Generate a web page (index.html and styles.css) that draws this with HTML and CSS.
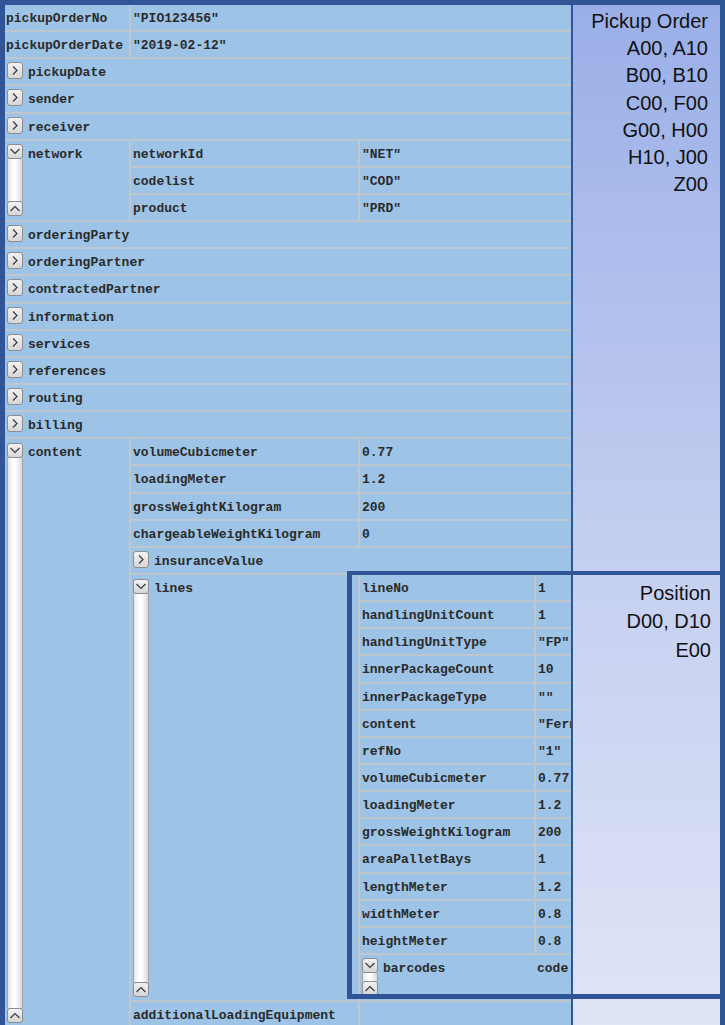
FILE: index.html
```html
<!DOCTYPE html>
<html>
<head>
<meta charset="utf-8">
<title>Pickup Order</title>
<link rel="stylesheet" href="styles.css">
</head>
<body>
<div class="frame">
  <div class="tree">
    <div class="row"><div class="k k0">pickupOrderNo</div><div class="v">"PIO123456"</div></div>
    <div class="row"><div class="k k0">pickupOrderDate</div><div class="v">"2019-02-12"</div></div>
    <div class="row"><div class="tog"><span class="btn"><svg viewBox="0 0 14 15"><path d="M5 3.5 L9 7.5 L5 11.5"/></svg></span></div><div class="lbl">pickupDate</div></div>
    <div class="row"><div class="tog"><span class="btn"><svg viewBox="0 0 14 15"><path d="M5 3.5 L9 7.5 L5 11.5"/></svg></span></div><div class="lbl">sender</div></div>
    <div class="row"><div class="tog"><span class="btn"><svg viewBox="0 0 14 15"><path d="M5 3.5 L9 7.5 L5 11.5"/></svg></span></div><div class="lbl">receiver</div></div>
    <div class="row">
      <div class="tog"><div class="sb"><span class="sbb"><svg viewBox="0 0 14 13"><path d="M2.5 4 L7 8.5 L11.5 4"/></svg></span><span class="trk"></span><span class="sbb"><svg viewBox="0 0 14 13"><path d="M2.5 9 L7 4.5 L11.5 9"/></svg></span></div></div>
      <div class="lbl l0">network</div>
      <div class="nest">
        <div class="row"><div class="k k1">networkId</div><div class="v">"NET"</div></div>
        <div class="row"><div class="k k1">codelist</div><div class="v">"COD"</div></div>
        <div class="row last"><div class="k k1">product</div><div class="v">"PRD"</div></div>
      </div>
    </div>
    <div class="row"><div class="tog"><span class="btn"><svg viewBox="0 0 14 15"><path d="M5 3.5 L9 7.5 L5 11.5"/></svg></span></div><div class="lbl">orderingParty</div></div>
    <div class="row"><div class="tog"><span class="btn"><svg viewBox="0 0 14 15"><path d="M5 3.5 L9 7.5 L5 11.5"/></svg></span></div><div class="lbl">orderingPartner</div></div>
    <div class="row"><div class="tog"><span class="btn"><svg viewBox="0 0 14 15"><path d="M5 3.5 L9 7.5 L5 11.5"/></svg></span></div><div class="lbl">contractedPartner</div></div>
    <div class="row"><div class="tog"><span class="btn"><svg viewBox="0 0 14 15"><path d="M5 3.5 L9 7.5 L5 11.5"/></svg></span></div><div class="lbl">information</div></div>
    <div class="row"><div class="tog"><span class="btn"><svg viewBox="0 0 14 15"><path d="M5 3.5 L9 7.5 L5 11.5"/></svg></span></div><div class="lbl">services</div></div>
    <div class="row"><div class="tog"><span class="btn"><svg viewBox="0 0 14 15"><path d="M5 3.5 L9 7.5 L5 11.5"/></svg></span></div><div class="lbl">references</div></div>
    <div class="row"><div class="tog"><span class="btn"><svg viewBox="0 0 14 15"><path d="M5 3.5 L9 7.5 L5 11.5"/></svg></span></div><div class="lbl">routing</div></div>
    <div class="row"><div class="tog"><span class="btn"><svg viewBox="0 0 14 15"><path d="M5 3.5 L9 7.5 L5 11.5"/></svg></span></div><div class="lbl">billing</div></div>
    <div class="row">
      <div class="tog tog-c"><div class="sb"><span class="sbb"><svg viewBox="0 0 14 13"><path d="M2.5 4 L7 8.5 L11.5 4"/></svg></span><span class="trk"></span><span class="sbb"><svg viewBox="0 0 14 13"><path d="M2.5 9 L7 4.5 L11.5 9"/></svg></span></div></div>
      <div class="lbl l0">content</div>
      <div class="nest">
        <div class="row"><div class="k k1">volumeCubicmeter</div><div class="v">0.77</div></div>
        <div class="row"><div class="k k1">loadingMeter</div><div class="v">1.2</div></div>
        <div class="row"><div class="k k1">grossWeightKilogram</div><div class="v">200</div></div>
        <div class="row"><div class="k k1">chargeableWeightKilogram</div><div class="v">0</div></div>
        <div class="row"><div class="tog"><span class="btn"><svg viewBox="0 0 14 15"><path d="M5 3.5 L9 7.5 L5 11.5"/></svg></span></div><div class="lbl">insuranceValue</div></div>
        <div class="row">
          <div class="tog tog-l"><div class="sb"><span class="sbb"><svg viewBox="0 0 14 13"><path d="M2.5 4 L7 8.5 L11.5 4"/></svg></span><span class="trk"></span><span class="sbb"><svg viewBox="0 0 14 13"><path d="M2.5 9 L7 4.5 L11.5 9"/></svg></span></div></div>
          <div class="lbl l1">lines</div>
          <div class="nest">
            <div class="row"><div class="k k2">lineNo</div><div class="v">1</div></div>
            <div class="row"><div class="k k2">handlingUnitCount</div><div class="v">1</div></div>
            <div class="row"><div class="k k2">handlingUnitType</div><div class="v">"FP"</div></div>
            <div class="row"><div class="k k2">innerPackageCount</div><div class="v">10</div></div>
            <div class="row"><div class="k k2">innerPackageType</div><div class="v">""</div></div>
            <div class="row"><div class="k k2">content</div><div class="v">"Fernseher"</div></div>
            <div class="row"><div class="k k2">refNo</div><div class="v">"1"</div></div>
            <div class="row"><div class="k k2">volumeCubicmeter</div><div class="v">0.77</div></div>
            <div class="row"><div class="k k2">loadingMeter</div><div class="v">1.2</div></div>
            <div class="row"><div class="k k2">grossWeightKilogram</div><div class="v">200</div></div>
            <div class="row"><div class="k k2">areaPalletBays</div><div class="v">1</div></div>
            <div class="row"><div class="k k2">lengthMeter</div><div class="v">1.2</div></div>
            <div class="row"><div class="k k2">widthMeter</div><div class="v">0.8</div></div>
            <div class="row"><div class="k k2">heightMeter</div><div class="v">0.8</div></div>
            <div class="row last tall">
              <div class="tog"><div class="sb"><span class="sbb"><svg viewBox="0 0 14 13"><path d="M2.5 4 L7 8.5 L11.5 4"/></svg></span><span class="trk"></span><span class="sbb"><svg viewBox="0 0 14 13"><path d="M2.5 9 L7 4.5 L11.5 9"/></svg></span></div></div>
              <div class="lbl l2">barcodes</div>
              <div class="v vb">code</div>
            </div>
          </div>
        </div>
        <div class="row last"><div class="k k1">additionalLoadingEquipment</div><div class="v"></div></div>
      </div>
    </div>
  </div>
  <div class="panel">
    <div class="note">Pickup Order<br>A00, A10<br>B00, B10<br>C00, F00<br>G00, H00<br>H10, J00<br>Z00</div>
  </div>
</div>
<div class="posbox">
  <div class="note note-pos">Position<br>D00, D10<br>E00</div>
</div>
</body>
</html>
```

FILE: styles.css
```css
html, body {
  margin: 0;
  padding: 0;
}
body {
  position: relative;
  width: 725px;
  height: 1025px;
  overflow: hidden;
  background: #2f5597;
}
.frame {
  display: flex;
  box-sizing: border-box;
  width: 725px;
  height: 1025px;
  border-top: 5px solid #2f5597;
  border-left: 5px solid #2f5597;
  border-right: 5px solid #2f5597;
  overflow: hidden;
}
.tree {
  width: 566px;
  flex: none;
  background: #9dc3e6;
  overflow: hidden;
  font-family: "Liberation Mono", "Courier New", monospace;
  font-weight: bold;
  font-size: 13px;
  color: #2a2a2a;
}
.row {
  display: flex;
  min-height: 25.14px;
  border-bottom: 2px solid #bfc6ce;
}
.row.last {
  border-bottom: 0;
}
.row.tall {
  height: 45px;
}
.k, .v, .lbl {
  padding-top: 2px;
  line-height: 23.14px;
  white-space: nowrap;
  overflow: hidden;
  box-sizing: border-box;
}
.k {
  flex: none;
  border-right: 2px solid #bfc6ce;
  padding-left: 2px;
}
.k0 {
  width: 126px;
  padding-left: 1px;
}
.k1 {
  width: 229px;
}
.k2 {
  width: 176px;
}
.v {
  flex: 1;
  min-width: 0;
  padding-left: 2px;
}
.vb {
  padding-left: 1px;
}
.lbl {
  flex: 1;
  min-width: 0;
}
.lbl.l0 {
  flex: none;
  width: 101px;
}
.lbl.l1 {
  flex: none;
  width: 204px;
}
.lbl.l2 {
  flex: none;
  width: 153px;
}
.tog {
  flex: none;
  width: 23px;
  box-sizing: border-box;
  padding: 3px 0 4px 2px;
  display: flex;
  flex-direction: column;
}
.tog-c {
  padding-top: 4px;
}
.tog-l {
  padding-top: 4px;
  padding-bottom: 3px;
}
.btn, .sbb {
  display: block;
  box-sizing: border-box;
  width: 16px;
  height: 17px;
  border: 1px solid #8e8e8e;
  border-radius: 3px;
  background: linear-gradient(#f2f2f2, #d6d6d6);
  flex: none;
}
.sbb {
  height: 15px;
}
.btn svg, .sbb svg {
  display: block;
  width: 14px;
  height: 100%;
}
.btn path, .sbb path {
  fill: none;
  stroke: #3a3a3a;
  stroke-width: 1.2;
}
.sb {
  flex: 1;
  display: flex;
  flex-direction: column;
  width: 16px;
}
.trk {
  flex: 1;
  box-sizing: border-box;
  width: 16px;
  border-left: 1px solid #a4a4a4;
  border-right: 1px solid #a4a4a4;
  background: linear-gradient(to right, #e4e4e4, #ffffff 35%, #ffffff 55%, #d8d8d8);
}
.nest {
  flex: 1;
  min-width: 0;
  display: flex;
  flex-direction: column;
  border-left: 2px solid #bfc6ce;
}
.panel {
  flex: none;
  box-sizing: border-box;
  width: 149px;
  border-left: 2px solid #2f5597;
  background: linear-gradient(to bottom, #9aafe8, #c6d0f0 56%, #dfe4f6);
  padding: 3px 12px 0 0;
}
.note {
  font-family: "Liberation Sans", Arial, sans-serif;
  font-size: 20px;
  line-height: 27.2px;
  color: #111111;
  text-align: right;
}
.posbox {
  position: absolute;
  left: 347px;
  top: 571px;
  width: 378px;
  height: 428px;
  box-sizing: border-box;
  border: 5px solid #2f5597;
  border-top-width: 4px;
  padding: 4px 9px 0 0;
}
.note-pos {
  line-height: 28.4px;
}
```
